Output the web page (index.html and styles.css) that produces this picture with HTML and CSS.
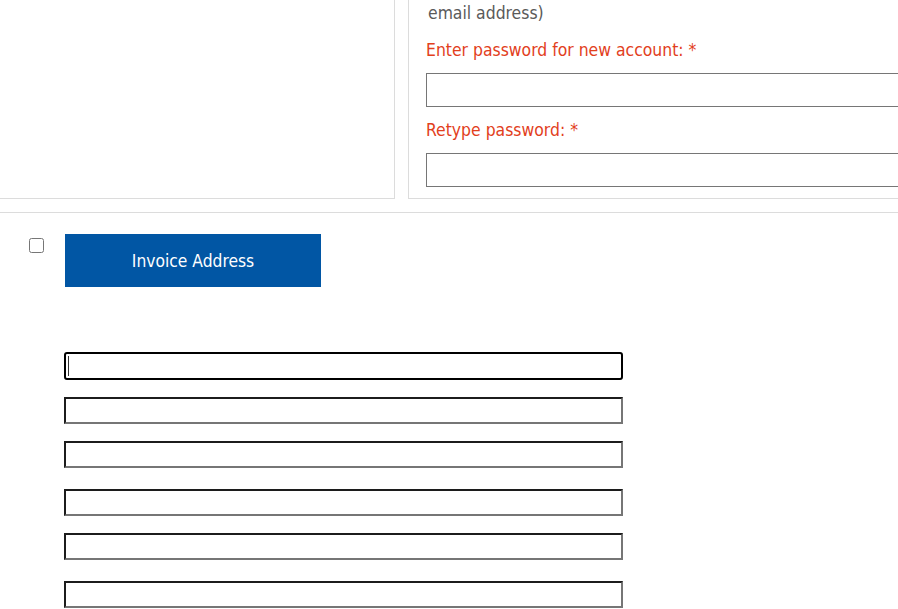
FILE: index.html
```html
<!DOCTYPE html>
<html lang="en">
<head>
<meta charset="utf-8">
<title>Account</title>
<link rel="stylesheet" href="styles.css">
</head>
<body>
<div class="page">
  <div class="top">
    <div class="panel-left"></div>
    <div class="panel-right">
      <div class="note">email address)</div>
      <label class="req-label" for="pw1">Enter password for new account: *</label>
      <input class="text-input" id="pw1" type="password">
      <label class="req-label" for="pw2">Retype password: *</label>
      <input class="text-input" id="pw2" type="password">
    </div>
  </div>
  <div class="divider"></div>
  <div class="invoice-row">
    <input class="check" type="checkbox">
    <button class="invoice-btn" type="button">Invoice Address</button>
  </div>
  <div class="fields">
    <div class="field-wrap"><input class="addr-input focused" type="text"><span class="caret"></span></div>
    <input class="addr-input" type="text">
    <input class="addr-input" type="text">
    <input class="addr-input gap-lg" type="text">
    <input class="addr-input" type="text">
    <input class="addr-input gap-lg" type="text">
  </div>
</div>
</body>
</html>
```

FILE: styles.css
```css
html, body {
  margin: 0;
  padding: 0;
  background: #fff;
  overflow: hidden;
}
.page {
  width: 898px;
  height: 609px;
  overflow: hidden;
  font-family: "DejaVu Sans Condensed", "DejaVu Sans", sans-serif;
}
.top {
  display: flex;
  height: 199px;
}
.panel-left {
  width: 395px;
  flex: none;
  border-right: 1px solid #dcdcdc;
  border-bottom: 1px solid #dcdcdc;
  box-sizing: border-box;
  height: 199px;
}
.panel-right {
  margin-left: 13px;
  flex: none;
  width: 600px;
  height: 199px;
  box-sizing: border-box;
  border-left: 1px solid #dcdcdc;
  border-bottom: 1px solid #dcdcdc;
  padding-left: 17px;
  display: flex;
  flex-direction: column;
  align-items: flex-start;
}
.note {
  color: #5a5a5a;
  font-size: 17.4px;
  line-height: 26px;
  padding-left: 2px;
  margin-top: 0;
}
.req-label {
  color: #e2401c;
  font-size: 17.4px;
  line-height: 22px;
  margin-top: 13px;
}
.text-input + .req-label {
  margin-top: 12px;
}
.req-label + .text-input {
  margin-top: 12px;
}
.text-input {
  width: 560px;
  height: 34px;
  box-sizing: border-box;
  border: 1px solid #767676;
  margin: 0;
  padding: 0;
}
.divider {
  margin-top: 13px;
  border-top: 1px solid #dcdcdc;
  height: 0;
}
.invoice-row {
  display: flex;
  align-items: flex-start;
  padding-top: 21px;
  padding-left: 29px;
}
.check {
  margin: 4px 0 0 0;
  width: 15px;
  height: 15px;
}
.invoice-btn {
  margin-left: 21px;
  width: 256px;
  height: 53px;
  background: #0156a4;
  color: #fff;
  border: 0;
  font-family: "DejaVu Sans Condensed", "DejaVu Sans", sans-serif;
  font-size: 17.3px;
  padding: 0;
}
.fields {
  display: flex;
  flex-direction: column;
  gap: 17px;
  padding-left: 64px;
  margin-top: 65px;
}
.field-wrap {
  position: relative;
  height: 28px;
}
.addr-input {
  display: block;
  width: 559px;
  height: 27px;
  box-sizing: border-box;
  margin: 0;
  padding: 0;
  border-width: 2px;
  border-style: solid;
  border-color: #1c1c1c #767676 #767676 #1c1c1c;
  background: #fff;
}
.addr-input.focused {
  height: 28px;
  border-color: #000;
  border-radius: 3px;
  outline: none;
}
.gap-lg {
  margin-top: 4px;
}
.caret {
  position: absolute;
  left: 4px;
  top: 4px;
  width: 1px;
  height: 20px;
  background: #333;
}
```
